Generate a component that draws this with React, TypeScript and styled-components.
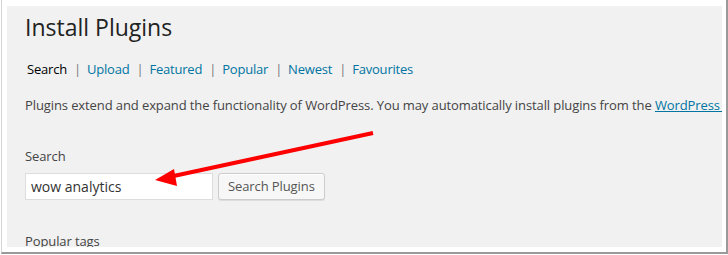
import React from 'react';
import styled, { createGlobalStyle } from 'styled-components';

// ========== Style start ==========================

const GlobalStyle = createGlobalStyle`
  html, body {
    margin: 0;
    padding: 0;
    background: #fff;
  }
  body {
    font-family: "Open Sans", "Liberation Sans", sans-serif;
  }
`;

const Shot = styled.div`
  box-sizing: border-box;
  width: 727px;
  height: 254px;
  margin-left: 1px;
  background: #fff;
  border-left: 1px solid #d4d4d4;
  border-right: 2px solid #9a9a9a;
  border-bottom: 2px solid #9a9a9a;
  padding: 6px 4px 5px 5px;
`;

const Wrap = styled.div`
  position: relative;
  box-sizing: border-box;
  height: 100%;
  background: #f1f1f1;
  overflow: hidden;
  padding: 7px 0 0 18px;
  color: #444;
  font-size: 13px;
  line-height: 20px;
  letter-spacing: -0.1px;
`;

const Title = styled.h2`
  margin: 0;
  font-size: 23px;
  font-weight: 400;
  line-height: 29px;
  letter-spacing: 0;
  color: #222;
`;

const Tabs = styled.ul`
  list-style: none;
  display: flex;
  margin: 17px 0 0 2px;
  padding: 0;
  white-space: nowrap;
  letter-spacing: -0.2px;
`;

const Tab = styled.li<{ $current?: boolean }>`
  color: ${p => (p.$current ? '#000' : '#0074a2')};

  &:not(:first-child)::before {
    content: "|";
    color: #777;
    margin: 0 6px 0 7px;
  }
`;

const Intro = styled.p`
  margin: 16px 0 0;
  white-space: nowrap;

  a {
    color: #0074a2;
    text-decoration: underline;
  }
`;

const Label = styled.h4`
  margin: 31px 0 0;
  font-size: 13px;
  font-weight: 400;
  line-height: 20px;
  color: #444;
`;

const SearchRow = styled.form`
  display: flex;
  gap: 5px;
  margin-top: 7px;
`;

const SearchInput = styled.input`
  box-sizing: border-box;
  width: 188px;
  height: 27px;
  margin: 0;
  padding: 0 5px;
  border: 1px solid #ddd;
  background: #fff;
  font-family: "Open Sans", "Liberation Sans", sans-serif;
  font-size: 14px;
  color: #333;
  outline: none;
`;

const Button = styled.button`
  box-sizing: border-box;
  height: 27px;
  margin: 0;
  padding: 0 9px 1px;
  white-space: nowrap;
  border: 1px solid #ccc;
  border-radius: 3px;
  background: #f7f7f7;
  box-shadow: inset 0 1px 0 #fff, 0 1px 0 rgba(0, 0, 0, 0.08);
  font-family: "Open Sans", "Liberation Sans", sans-serif;
  font-size: 13px;
  letter-spacing: -0.1px;
  color: #555;
`;

const SubHead = styled.h4`
  margin: 31px 0 0;
  font-size: 13px;
  font-weight: 400;
  line-height: 20px;
  color: #444;
`;

// the red annotation arrow drawn on top of the page
const Arrow = styled.svg`
  position: absolute;
  left: 0;
  top: 0;
  pointer-events: none;
`;

// ========== Style end ==========================

const tabs = ['Search', 'Upload', 'Featured', 'Popular', 'Newest', 'Favourites'];

const App: React.FC = () => {
  return (
    <>
      <GlobalStyle />
      <Shot>
        <Wrap>
          <Title>Install Plugins</Title>
          <Tabs>
            {tabs.map((t, i) => (
              <Tab key={t} $current={i === 0}>{t}</Tab>
            ))}
          </Tabs>
          <Intro>
            Plugins extend and expand the functionality of WordPress. You may automatically install plugins from the{' '}
            <a href="#">WordPress Plugin Directory</a> or upload a plugin in .zip format via this page.
          </Intro>
          <Label>Search</Label>
          <SearchRow onSubmit={e => e.preventDefault()}>
            <SearchInput type="search" defaultValue="wow analytics" />
            <Button type="submit">Search Plugins</Button>
          </SearchRow>
          <SubHead>Popular tags</SubHead>
          <Arrow width="714" height="240" viewBox="0 0 714 240">
            <line x1="366" y1="127" x2="162" y2="171" stroke="#ff0000" strokeWidth="4" strokeLinecap="butt" />
            <polygon points="148,174 167,163 170,180" fill="#ff0000" />
          </Arrow>
        </Wrap>
      </Shot>
    </>
  );
};

export default App;
